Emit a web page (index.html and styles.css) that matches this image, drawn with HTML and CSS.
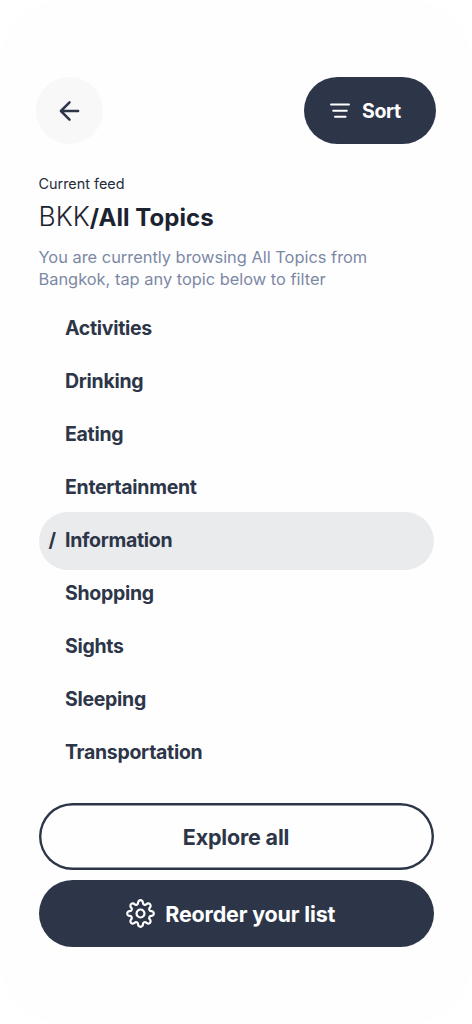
FILE: index.html
```html
<!DOCTYPE html>
<html lang="en">
<head>
<meta charset="utf-8">
<title>All Topics</title>
<link rel="stylesheet" href="styles.css">
</head>
<body>
<main class="screen">
  <header class="toolbar">
    <button class="back" aria-label="Back">
      <svg width="22" height="22" viewBox="0 0 22 22"><path d="M19.1 11H1.9M10.5 2.4L1.9 11l8.6 8.6"/></svg>
    </button>
    <button class="sort">
      <svg width="20" height="16" viewBox="0 0 20 16"><path d="M1 1.4h18M3.2 7.8h13.6M5 13.8h10.6"/></svg>
      <span>Sort</span>
    </button>
  </header>
  <section class="intro">
    <p class="label">Current feed</p>
    <h1 class="title"><span class="city">BKK</span>/All Topics</h1>
    <p class="hint">You are currently browsing All Topics from<br>Bangkok, tap any topic below to filter</p>
  </section>
  <ul class="topics">
    <li class="topic">Activities</li>
    <li class="topic">Drinking</li>
    <li class="topic">Eating</li>
    <li class="topic">Entertainment</li>
    <li class="topic active"><span class="slash">/</span>Information</li>
    <li class="topic">Shopping</li>
    <li class="topic">Sights</li>
    <li class="topic">Sleeping</li>
    <li class="topic">Transportation</li>
  </ul>
  <footer class="actions">
    <button class="action outline">Explore all</button>
    <button class="action solid">
      <svg width="29" height="29" viewBox="-12 -12 24 24"><circle r="3.3"/><path d="M-1.997-8.89A2 2 0 1 1 1.997-8.89A1.65 1.65 0 0 0 4.874-7.698A2 2 0 1 1 7.698-4.874A1.65 1.65 0 0 0 8.89-1.997A2 2 0 1 1 8.89 1.997A1.65 1.65 0 0 0 7.698 4.874A2 2 0 1 1 4.874 7.698A1.65 1.65 0 0 0 1.997 8.89A2 2 0 1 1-1.997 8.89A1.65 1.65 0 0 0-4.874 7.698A2 2 0 1 1-7.698 4.874A1.65 1.65 0 0 0-8.89 1.997A2 2 0 1 1-8.89-1.997A1.65 1.65 0 0 0-7.698-4.874A2 2 0 1 1-4.874-7.698A1.65 1.65 0 0 0-1.997-8.89z"/></svg>
      <span>Reorder your list</span>
    </button>
  </footer>
</main>
</body>
</html>
```
FILE: styles.css
```css
* { box-sizing: border-box; }
body { margin: 0; background: #fff; }
button { border: 0; padding: 0; font: inherit; color: inherit; }
svg { fill: none; stroke: currentColor; stroke-linecap: round; stroke-linejoin: round; flex: none; }

.screen {
  width: 472px;
  height: 1024px;
  padding: 77px 38.5px 0;
  border-radius: 64px;
  background: #fefefe;
  color: #2d3649;
  font-family: Inter, "Liberation Sans", sans-serif;
  overflow: hidden;
}

.toolbar { display: flex; justify-content: space-between; margin: 0 -2.5px; }
.back {
  display: grid;
  place-items: center;
  width: 67px;
  height: 67px;
  border-radius: 50%;
  background: #f8f8f8;
}
.back svg { stroke-width: 2.5; }
.sort {
  display: flex;
  align-items: center;
  gap: 12px;
  width: 132px;
  height: 67px;
  padding-left: 26px;
  border-radius: 34px;
  background: #2d3649;
  color: #fff;
  font-size: 19.5px;
  font-weight: 700;
  letter-spacing: -0.35px;
}
.sort svg { stroke-width: 2; }

.intro { padding-top: 31px; }
.label { margin: 0; font-size: 14.4px; line-height: 18px; color: #252c3b; }
.title { margin: 7px 0 0; font-size: 24px; line-height: 34px; font-weight: 700; letter-spacing: 0.05px; color: #1c2330; }
.city { font-size: 26.3px; font-weight: 300; }
.hint { margin: 12px 0 0; font-size: 16.4px; line-height: 21.5px; color: #7c88a5; white-space: nowrap; }

.topics { list-style: none; margin: 12px 0 0; padding: 0; }
.topic {
  display: flex;
  align-items: center;
  height: 52.9px;
  padding-left: 26.5px;
  font-size: 19.5px;
  font-weight: 700;
  letter-spacing: -0.3px;
}
.active {
  height: 57.5px;
  margin: -1.5px 0 -2.8px;
  padding: 0 0 2.4px 10px;
  border-radius: 29px;
  background: #e9ebec;
}
.slash { width: 16.5px; }

.actions { display: flex; flex-direction: column; gap: 9.5px; margin-top: 24.7px; }
.action {
  display: flex;
  align-items: center;
  justify-content: center;
  gap: 10px;
  height: 67px;
  border-radius: 34px;
  font-size: 21.5px;
  font-weight: 700;
  letter-spacing: -0.17px;
}
.outline { box-shadow: inset 0 0 0 2.4px #2d3649; padding-top: 1px; background: #fefefe; }
.solid { padding: 1px 10.5px 0 0; background: #2d3649; color: #fff; }
.solid svg { stroke-width: 1.8; overflow: visible; }
```
